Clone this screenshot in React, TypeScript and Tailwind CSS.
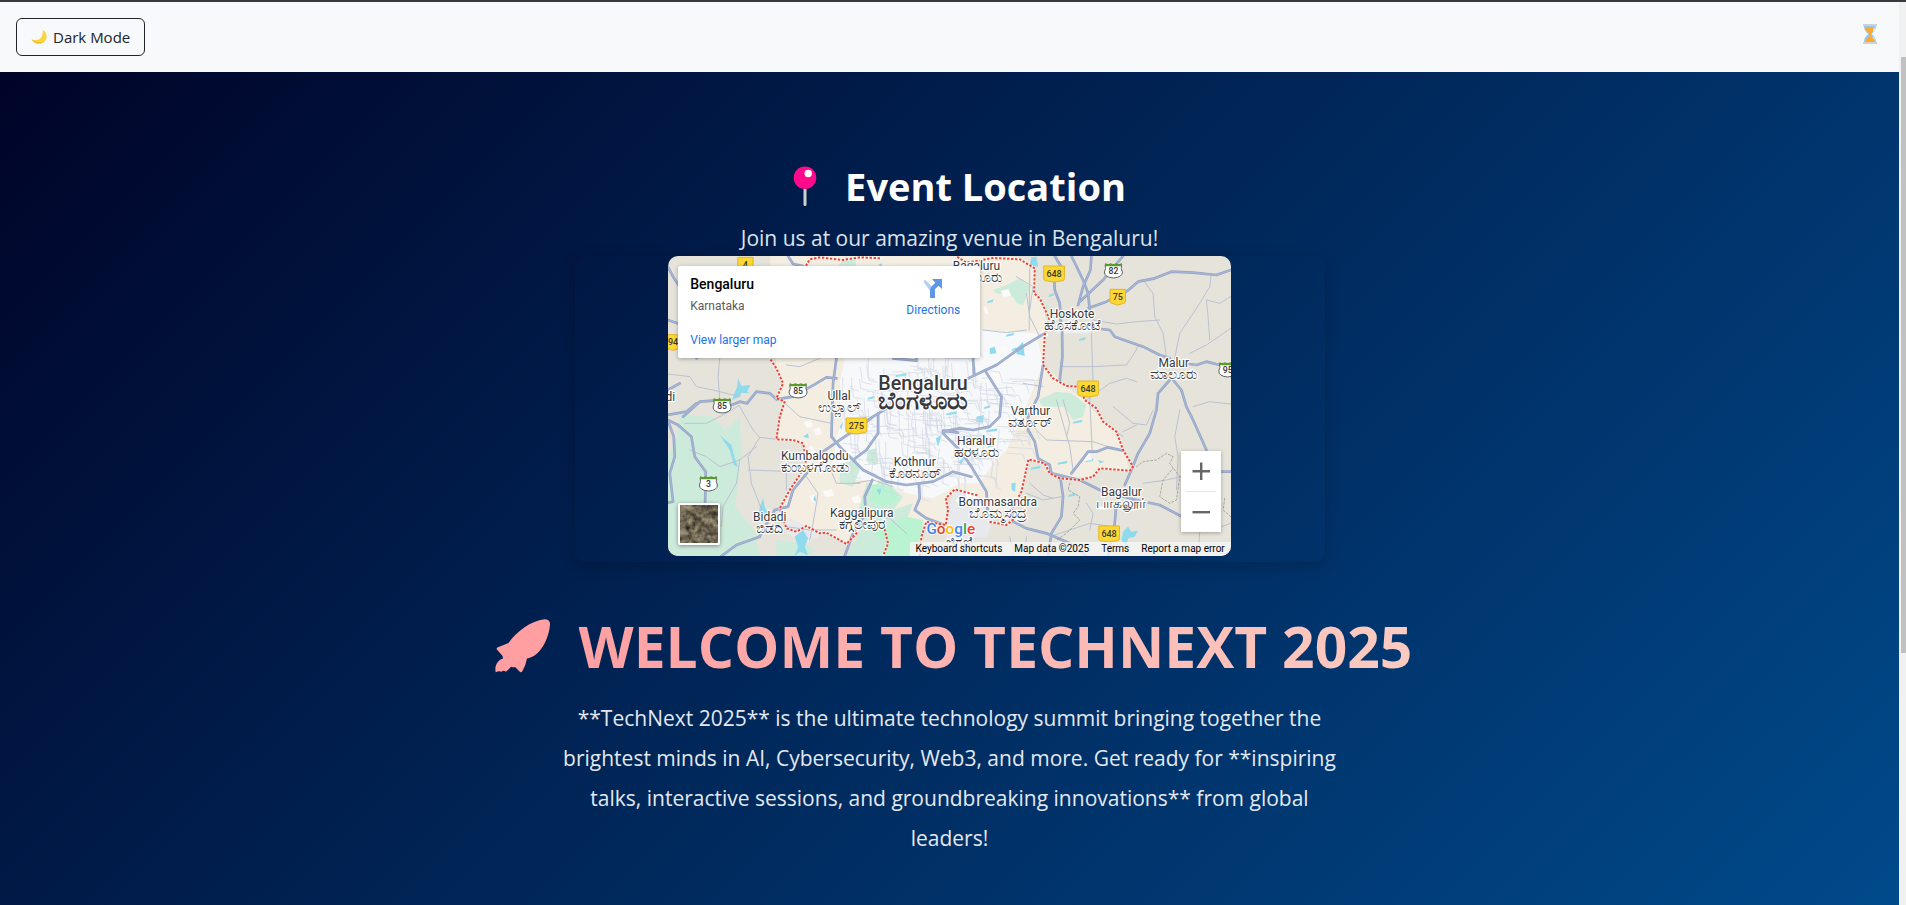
import React from "react";

const RED_BOUNDARY =
  "M675 840 L685 880 L670 918 M590 850 L560 882 L500 848 L480 850 L440 828 L410 845 L380 835 L360 775 L390 720 L420 675 L440 630 L430 580 L400 570 L350 568 L360 500 L375 455 L350 445 L370 400 L350 355 L330 325 M440 45 L450 28 L480 22 L548 30 L600 22 L665 25 M895 22 L920 38 L1000 24 L1080 28 L1125 55 L1123 130 L1140 145 L1168 205 L1155 255 L1150 345 L1180 385 L1220 408 L1260 410 L1275 450 L1310 475 L1330 515 L1370 545 L1390 600 L1420 650 L1410 662 L1320 655 L1300 680 L1260 690 L1200 685 L1170 670 L1155 640 L1106 628 L1095 680 L1085 725 L1055 780 L1065 805 L1040 825 L985 815 M950 735 L885 718 L858 745 L865 780 L858 825 L800 815 L785 860 L780 918";

const CITY_AREA =
  "M330 0 L350 355 L370 400 L350 440 L375 455 L350 568 L430 580 L440 630 L360 775 L380 835 L440 828 L500 848 L560 882 L600 840 L690 840 L780 830 L858 825 L858 745 L885 720 L950 735 L1000 800 L1070 760 L1106 628 L1155 640 L1200 685 L1300 680 L1320 655 L1410 662 L1390 600 L1370 545 L1330 515 L1275 450 L1220 408 L1150 345 L1155 255 L1168 205 L1125 130 L1125 40 L1000 0 Z";

const MAJOR_ROADS = [
  "M24 50 L40 80 L60 110 L110 135",
  "M24 210 L60 222",
  "M24 420 L60 400",
  "M70 500 L120 455 L160 452 L215 465 L240 455 L262 460 L290 425 L330 430 L350 448 L400 440 L470 400 L500 382 L530 385",
  "M24 510 L55 525 L95 560 L105 620 L138 665 L136 760",
  "M24 510 L42 560 L45 620 L30 670 L40 755 L24 758",
  "M24 495 L80 485 L110 460",
  "M530 325 L520 400 L515 560 L540 590",
  "M490 605 L555 560 L600 530 L640 500 L690 470",
  "M300 860 L230 885 L185 918",
  "M300 858 L345 780 L385 770 L400 720 L445 665",
  "M655 490 L655 550 L620 600 L580 630 L610 660 L680 695 L740 705 L820 695 L880 665 L935 680",
  "M540 590 L580 630",
  "M638 690 L615 740 L618 790 L580 850 L555 918",
  "M778 705 L780 745 L765 780 L800 805 L855 825",
  "M700 325 L770 332 L770 318",
  "M940 325 L943 375",
  "M925 385 L1010 345 L1080 295 L1155 250",
  "M978 365 L1025 440 L1020 500 L990 530 L940 540 L900 535 L850 545 L850 550 L900 600 L935 650 L980 725 L985 800",
  "M850 542 L895 548",
  "M1150 345 L1135 440 L1105 500 L1105 540 L1125 575 L1135 625",
  "M1135 625 L1170 645 L1175 670",
  "M1235 670 L1270 625 L1285 605 L1310 605 L1345 592 L1390 602",
  "M1175 670 L1260 690 L1320 720 L1420 748 L1500 765 L1563 798",
  "M1202 685 L1210 740 L1205 800 L1175 850 L1165 918",
  "M1060 815 L1100 835 L1160 850 L1230 880 L1280 918",
  "M1185 18 L1210 60 M1183 80 L1185 120 L1200 160 L1203 215",
  "M1207 240 L1208 320 L1200 390",
  "M1235 18 L1270 90 L1285 130 L1290 180",
  "M1295 18 L1292 60 L1270 110 L1255 165",
  "M1390 18 L1330 90 L1260 155",
  "M1285 175 L1340 155 L1400 125 L1435 95 L1485 85 L1535 65 L1600 68 L1670 75 L1713 60",
  "M1325 237 L1350 240 L1365 260 L1450 290 L1500 315 L1530 325",
  "M1590 342 L1610 345 L1640 335 L1680 345 L1713 350",
  "M1530 390 L1495 430 L1490 480 L1470 550 L1435 610 L1415 660 L1395 705",
  "M1540 390 L1565 420 L1580 470 L1600 510 L1640 600",
  "M1370 760 L1365 820 L1345 918",
  "M1683 665 L1713 665",
  "M135 310 L110 325",
  "M385 18 L400 42 L430 48",
];

const MINOR_ROADS = [
  "M24 372 L90 380 L110 410 L160 420 L240 440",
  "M100 60 L150 110 L180 170",
  "M180 325 L175 380 L180 450",
  "M240 470 L280 540 L300 562 L350 568",
  "M300 562 L265 620 L275 700 L310 790 L330 850",
  "M265 660 L380 664 L380 720",
  "M75 520 L140 520 L200 490 L240 465",
  "M90 600 L140 620 L180 650 L240 630 L290 590",
  "M240 630 L230 700 L190 770 L185 830",
  "M370 455 L420 500 L515 520",
  "M380 345 L420 350 L480 325",
  "M440 680 L475 730 L460 820 L450 870",
  "M515 665 L530 700 L600 700",
  "M380 830 L450 840 L530 840",
  "M600 780 L690 805 L740 850",
  "M580 700 L640 690 L700 710",
  "M1090 400 L1150 410 M1100 240 L1040 248 L970 240",
  "M1100 130 L1110 200 L1140 260 M1108 240 L1110 55",
  "M1070 80 L1120 110 L1110 180",
  "M1300 210 L1370 222 L1430 215 L1500 210",
  "M1210 350 L1300 350 L1400 345 L1430 300 L1435 285",
  "M1295 250 L1300 400 L1290 440 L1297 600",
  "M1450 90 L1480 130 L1485 200 L1510 250 L1520 320",
  "M1545 325 L1560 250 L1620 160 L1650 110 L1655 70",
  "M1590 310 L1640 285 L1713 235",
  "M1360 470 L1420 520 L1460 525 L1480 480",
  "M1390 560 L1370 545 M1390 545 L1430 525",
  "M1280 450 L1350 400 L1400 385 L1430 395",
  "M1600 470 L1650 455 L1713 462",
  "M1560 480 L1545 560 L1555 620 L1550 720",
  "M1190 450 L1230 590 L1240 660",
  "M1100 510 L1160 570 L1300 575 L1345 590",
  "M1210 450 L1230 520 L1220 560",
  "M1110 700 L1150 735 L1180 745",
  "M1100 730 L1150 750 L1205 740",
  "M1050 860 L1060 918 M1100 860 L1095 918",
  "M1170 860 L1230 840 L1290 820 L1360 830",
  "M1280 760 L1300 790 L1290 840",
  "M1620 846 L1615 918 M1640 846 L1713 820",
  "M1450 700 L1520 690 L1563 680",
  "M1640 150 L1680 160 L1713 140",
  "M1640 150 L1645 200 L1650 270",
];

const DASHED_TRACKS =
  "M1430 650 L1450 635 L1490 630 L1520 610 L1540 620 L1530 640 L1560 680 L1550 750 L1530 760 L1500 740 L1510 690 L1540 655 M1230 700 L1225 720 L1260 740 L1255 770 L1240 790 L1260 810 L1220 850 L1190 870 M1695 745 L1690 780 L1713 800";

const GREEN_AREAS = [
  "M60 490 L130 500 L150 495 L195 540 L240 500 L245 590 L240 660 L225 770 L290 850 L260 918 L24 918 L24 620 L50 560 Z",
  "M620 700 L670 690 L730 740 L700 780 L760 760 L740 810 L690 880 L670 918 L560 918 L600 850 L590 800 Z",
  "M170 880 L290 870 L300 918 L180 918 Z",
  "M1000 120 L1040 105 L1080 85 L1110 110 L1100 140 L1090 165 L1070 160 L1060 140 L1010 130 Z",
  "M1135 450 L1190 425 L1235 430 L1280 465 L1270 500 L1240 510 L1215 470 L1150 470 Z",
  "M540 640 L590 630 L600 660 L580 710 L540 700 Z",
  "M625 600 L650 595 L655 640 L635 650 L620 630 Z",
  "M535 48 L590 48 L585 25 L560 20 Z",
  "M1160 160 L1190 190 L1175 230 L1155 200 Z",
  "M350 870 L430 880 L470 900 L440 918 L350 918 Z",
  "M24 650 L70 690 L60 740 L24 740 Z",
];

const BRIGHT_GREEN =
  "M640 850 L690 820 L740 800 L790 810 L785 860 L770 918 L670 918 L685 880 Z M640 700 L700 715 L720 750 L670 770 L630 750 Z";

const WATER = [
  "M222 435 L232 410 L235 385 L245 408 L272 405 L262 425 L270 430 L245 428 L240 440 L218 450 Z",
  "M180 555 L215 585 L225 625 L235 650 L222 645 L210 600 Z",
  "M300 770 L310 745 L316 775 L330 790 L310 800 L298 785 Z",
  "M405 860 L430 840 L445 865 L435 890 L445 915 L420 905 L405 918 L415 890 Z",
  "M1115 22 L1130 20 L1135 50 L1110 45 Z",
  "M1075 290 L1090 275 L1095 318 L1070 312 Z",
  "M990 295 L1005 290 L1010 310 L990 312 Z",
  "M950 500 L972 495 L970 518 L950 516 Z",
  "M828 565 L845 555 L835 590 Z",
  "M1055 700 L1068 698 L1066 725 L1056 720 Z",
  "M1390 845 L1405 830 L1415 845 L1435 842 L1425 860 L1405 865 L1400 890 L1385 870 Z",
  "M540 530 L550 515 L545 540 Z",
  "M650 720 L665 715 L660 735 Z",
  "M655 45 L665 40 L668 52 Z",
  "M1315 630 L1335 635 L1320 640 Z",
  "M895 635 L915 620 L905 645 Z",
  "M430 560 L445 550 L447 565 Z",
  "M460 750 L466 735 L470 755 Z",
];

function seeded(seed: number) {
  let s = seed;
  return () => {
    s = (s * 16807) % 2147483647;
    return s / 2147483647;
  };
}

function cityStreets(): string {
  const rand = seeded(77);
  let d = "";
  for (let i = 0; i < 250; i++) {
    const x = Math.round(540 + rand() * 540);
    const y = Math.round(310 + rand() * 370);
    const nx = (x - 800) / 290;
    const ny = (y - 490) / 220;
    if (nx * nx + ny * ny > 1) continue;
    const len = Math.round(25 + rand() * 60);
    const tilt = Math.round(rand() * 14 - 7);
    d += rand() > 0.5 ? `M${x} ${y}l${len} ${tilt}l8 ${20 + tilt}` : `M${x} ${y}l${tilt} ${len}l${20 + tilt} 6`;
  }
  return d;
}

function patches(): { x: number; y: number; w: number; water: boolean }[] {
  const rand = seeded(4242);
  return Array.from({ length: 60 }, () => ({
    x: Math.round(420 + rand() * 860),
    y: Math.round(70 + rand() * 680),
    w: Math.round(8 + rand() * 24),
    water: rand() > 0.6,
  }));
}

type Place = { x: number; y: number; en: string; local: string };

const PLACES: Place[] = [
  { x: 950, y: 60, en: "Bagaluru", local: "ಬಾಗಲೂರು" },
  { x: 1237, y: 204, en: "Hoskote", local: "ಹೊಸಕೋಟೆ" },
  { x: 1542, y: 351, en: "Malur", local: "ಮಾಲೂರು" },
  { x: 538, y: 449, en: "Ullal", local: "ಉಲ್ಲಾಲ್" },
  { x: 1112, y: 495, en: "Varthur", local: "ವರ್ತೂರ್" },
  { x: 950, y: 585, en: "Haralur", local: "ಹರಳೂರು" },
  { x: 465, y: 630, en: "Kumbalgodu", local: "ಕುಂಬಳಗೋಡು" },
  { x: 765, y: 648, en: "Kothnur", local: "ಕೊಠನೂರ್" },
  { x: 1385, y: 738, en: "Bagalur", local: "பாகலூர்" },
  { x: 1014, y: 768, en: "Bommasandra", local: "ಬೊಮ್ಮಸಂದ್ರ" },
  { x: 330, y: 813, en: "Bidadi", local: "ಬಿಡದಿ" },
  { x: 606, y: 801, en: "Kaggalipura", local: "ಕಗ್ಗಲೀಪುರ" },
];

const HIGHWAYS = [
  { x: 257, y: 44, n: "4" },
  { x: 40, y: 276, n: "94" },
  { x: 1183, y: 71, n: "648" },
  { x: 1374, y: 140, n: "75" },
  { x: 1285, y: 416, n: "648" },
  { x: 590, y: 527, n: "275" },
  { x: 1348, y: 851, n: "648" },
];

const STATE_ROADS = [
  { x: 1361, y: 62, n: "82" },
  { x: 415, y: 422, n: "85" },
  { x: 187, y: 467, n: "85" },
  { x: 146, y: 701, n: "3" },
  { x: 1704, y: 359, n: "95" },
];

function MapDrawing() {
  return (
    <svg
      viewBox="24 18 1689 900"
      preserveAspectRatio="xMidYMid slice"
      className="block h-full w-full font-[Roboto,'Noto_Sans',sans-serif]"
      role="img"
      aria-label="Map of Bengaluru"
    >
      <rect x="0" y="0" width="1740" height="940" fill="#e6e3da" />
      <path d={CITY_AREA} fill="#f4eee2" />
      <path
        d="M560 300 L700 250 L960 240 L1130 250 L1150 345 L1110 440 L1080 520 L1040 600 L1000 640 L960 700 L900 700 L820 745 L740 730 L660 690 L590 690 L520 640 L530 560 L560 480 L540 400 Z"
        fill="#f7f8fa"
      />
      <path d="M885 720 L950 735 L1010 790 L980 860 L860 870 L865 780 Z" fill="#e8e9ec" />
      <path d="M380 800 L440 828 L500 848 L440 880 L380 850 Z" fill="#e8e9ec" />
      <path d="M1190 220 L1290 215 L1290 250 L1190 250 Z" fill="#eceef1" />
      {GREEN_AREAS.map((d) => (
        <path key={d} d={d} fill="#cdebdb" />
      ))}
      <path d={BRIGHT_GREEN} fill="#b9f3d2" />
      {patches().map((p, i) => (
        <path
          key={i}
          d={`M${p.x} ${p.y} l${p.w} -6 l${p.water ? -2 : 8} ${p.water ? 8 : 20} l-${p.w} 4 Z`}
          fill={p.water ? "#90daee" : "#fbfaf8"}
        />
      ))}
      {WATER.map((d) => (
        <path key={d} d={d} fill="#90daee" />
      ))}
      <g fill="none" strokeLinejoin="round" strokeLinecap="round">
        <path d={cityStreets()} stroke="#cfd7e4" strokeWidth="2" />
        {MINOR_ROADS.map((d) => (
          <path key={d} d={d} stroke="#bac2d2" strokeWidth="3" />
        ))}
        {MAJOR_ROADS.map((d) => (
          <path key={d} d={d} stroke="#93a3c6" strokeWidth="8" />
        ))}
        {MAJOR_ROADS.map((d) => (
          <path key={d} d={d} stroke="#a6b5d4" strokeWidth="4" />
        ))}
        <path d={DASHED_TRACKS} stroke="#8b8b88" strokeWidth="2" strokeDasharray="6 6" />
        <path d={RED_BOUNDARY} stroke="#fff" strokeWidth="8" opacity="0.5" />
        <path d={RED_BOUNDARY} stroke="#ea4335" strokeWidth="6" strokeDasharray="1 11" strokeLinecap="square" />
      </g>

      {HIGHWAYS.map((h) => (
        <g key={`${h.x}-${h.n}`}>
          <path
            d={
              h.n.length > 2
                ? `M${h.x - 31} ${h.y - 23} h62 v38 q0 5 -5 6 l-26 4 l-26 -4 q-5 -1 -5 -6 Z`
                : `M${h.x - 23} ${h.y - 22} h46 v36 q0 5 -5 6 l-18 5 l-18 -5 q-5 -1 -5 -6 Z`
            }
            fill="#fdd835"
            stroke="#e0b623"
            strokeWidth="3"
            strokeLinejoin="round"
          />
          <text x={h.x} y={h.y + 10} textAnchor="middle" fontSize="27" fontWeight="500" fill="#3c3a2c">
            {h.n}
          </text>
        </g>
      ))}
      {STATE_ROADS.map((h) => (
        <g key={`${h.x}-${h.n}`}>
          <path
            d={`M${h.x - 25} ${h.y - 18} h50 q-4 12 2 22 q0 16 -27 18 q-27 -2 -27 -18 q6 -10 2 -22 Z`}
            fill="#fff"
            stroke="#5f6368"
            strokeWidth="3"
          />
          <path d={`M${h.x - 25} ${h.y - 23} l8 4 l9 -3 l8 3 l8 -3 l9 3 l8 -4 v10 h-50 Z`} fill="#5b9a2f" />
          <text x={h.x} y={h.y + 11} textAnchor="middle" fontSize="26" fontWeight="500" fill="#303236">
            {h.n}
          </text>
        </g>
      ))}

      <g
        textAnchor="middle"
        fill="#37393d"
        stroke="#fff"
        strokeWidth="7"
        strokeLinejoin="round"
        style={{ paintOrder: "stroke" }}
      >
        {PLACES.map((p) => (
          <g key={p.en}>
            <text x={p.x} y={p.y + 37} fontSize="43">
              {p.local}
            </text>
            <text x={p.x} y={p.y} fontSize="36">
              {p.en}
            </text>
          </g>
        ))}
        <text x="790" y="476" fontSize="72" fontWeight="700">
          ಬೆಂಗಳೂರು
        </text>
        <text x="790" y="419" fontSize="59" fontWeight="500">
          Bengaluru
        </text>
        <text x="32" y="453" fontSize="36">
          di
        </text>
        <text x="898" y="890" fontSize="43">
          ಜಿಗಣಿ
        </text>
      </g>

      <text
        x="800"
        y="852"
        fontSize="46"
        fontWeight="500"
        stroke="#fff"
        strokeWidth="5"
        style={{ paintOrder: "stroke" }}
      >
        <tspan fill="#4285f4">G</tspan>
        <tspan fill="#ea4335">o</tspan>
        <tspan fill="#fbbc04">o</tspan>
        <tspan fill="#4285f4">g</tspan>
        <tspan fill="#34a853">l</tspan>
        <tspan fill="#ea4335">e</tspan>
      </text>
    </svg>
  );
}

function DirectionsIcon() {
  return (
    <svg viewBox="0 0 20 20" className="size-5" aria-hidden="true">
      <path d="M2 1.5 L9.5 9 L8 14 L0.5 4 Z" fill="#b5d0f5" />
      <path d="M7 20 V12.5 Q7 10 9 8 L12.3 4.7 L9 1 H19 V11 L15.5 7.7 L12.4 10.8 Q12 11.3 12 12 V20 Z" fill="#5e97e6" />
    </svg>
  );
}

function SatelliteThumb() {
  return (
    <svg viewBox="0 0 38 38" className="block h-full w-full" aria-hidden="true">
      <filter id="terrain" x="0" y="0" width="100%" height="100%" colorInterpolationFilters="sRGB">
        <feTurbulence type="fractalNoise" baseFrequency="0.16" numOctaves="5" seed="8" />
        <feColorMatrix values="0.6 0.4 0 0 -0.07  0.55 0.4 0 0 -0.08  0.45 0.35 0 0 -0.08  0 0 0 0 1" />
      </filter>
      <rect width="38" height="38" filter="url(#terrain)" />
    </svg>
  );
}

function EventMap() {
  return (
    <div className="relative h-[300px] w-3/4 overflow-hidden rounded-[10px] font-[Roboto,sans-serif]">
      <MapDrawing />

      <div className="absolute top-2.5 left-2.5 flex h-[92px] w-[302px] justify-between rounded-xs bg-white pt-2.5 pr-5 pb-2 pl-3 shadow-[0_1px_4px_rgba(0,0,0,0.3)]">
        <div className="flex flex-col items-start">
          <strong className="text-sm leading-4 font-medium text-black">Bengaluru</strong>
          <span className="mt-1.5 text-xs leading-4 text-[#5b5b5b]">Karnataka</span>
          <a href="#map" className="mt-[18px] text-xs leading-4 text-[#1a73e8]">
            View larger map
          </a>
        </div>
        <a href="#directions" className="flex flex-col items-center pt-0.5 text-xs text-[#1a73e8]">
          <DirectionsIcon />
          <span className="mt-0.5 leading-5">Directions</span>
        </a>
      </div>

      <button
        type="button"
        aria-label="Show satellite imagery"
        className="absolute bottom-[11px] left-2.5 size-[42px] overflow-hidden rounded-xs border-2 border-white shadow-[0_1px_4px_rgba(0,0,0,0.4)]"
      >
        <SatelliteThumb />
      </button>

      <div className="absolute right-2.5 bottom-6 flex w-10 flex-col items-center bg-white shadow-[0_1px_4px_rgba(0,0,0,0.3)]">
        <button type="button" aria-label="Zoom in" className="flex h-10 w-10 items-center justify-center">
          <svg viewBox="0 0 18 18" className="size-[18px]" aria-hidden="true">
            <path d="M8 0.500h2.400v7.500H18v2.400h-7.600V18H8v-7.600H0.500V8H8Z" fill="#666" />
          </svg>
        </button>
        <span className="h-px w-[30px] bg-[#e6e6e6]" />
        <button type="button" aria-label="Zoom out" className="flex h-10 w-10 items-center justify-center">
          <svg viewBox="0 0 18 18" className="size-[18px]" aria-hidden="true">
            <path d="M0.500 8H18v2.400H0.500Z" fill="#666" />
          </svg>
        </button>
      </div>

      <div className="absolute right-0 bottom-0 flex h-3.5 items-center bg-[#f5f5f5]/80 text-[10px] leading-3.5 text-black">
        <button type="button" className="px-1.5">
          Keyboard shortcuts
        </button>
        <span className="px-1.5">Map data ©2025</span>
        <a href="#terms" className="px-1.5">
          Terms
        </a>
        <a href="#report" className="px-1.5">
          Report a map error
        </a>
      </div>
    </div>
  );
}

function MoonIcon() {
  return (
    <svg viewBox="0 0 16 16" className="size-4" aria-hidden="true">
      <path
        d="M11.400 0.800 C16 3 17 8.800 13.700 12.200 C10.200 15.900 3.500 15.400 0.500 10.200 C4 11.800 8 11.300 10 8.800 C11.800 6.500 12 3.600 11.400 0.800 Z"
        fill="#fdd43c"
      />
      <path d="M0.500 10.200 C3.500 15.400 10.200 15.900 13.700 12.200 C10 14.300 5 14 0.500 10.200 Z" fill="#f0b32e" />
    </svg>
  );
}

function HourglassIcon() {
  return (
    <svg viewBox="0 0 14 20" className="h-5 w-3.5" role="img" aria-label="Countdown">
      <path d="M1 1.500 H13 C13 6 11 8 8.600 10 C11 12 13 14 13 18.500 H1 C1 14 3 12 5.400 10 C3 8 1 6 1 1.500 Z" fill="#8fc9f5" />
      <path d="M2 3.500 H12 C11.500 6.500 9.500 8 7 10 C4.500 8 2.500 6.500 2 3.500 Z" fill="#ffaa2b" />
      <path d="M6 9 H8 V12.500 C10 13.500 11.500 15.500 12 18 H2 C2.500 15.500 4 13.500 6 12.500 Z" fill="#ffaa2b" />
      <path d="M10 6 C11 5 11.500 4 12 3 V6 L10 8 Z M9.500 12 L11.500 14 L12 16.500 L10.500 14.500 Z" fill="#e3f2fd" />
      <rect width="14" height="2" fill="#cfd1d4" />
      <rect y="18" width="14" height="2" fill="#cfd1d4" />
    </svg>
  );
}

function PinIcon() {
  return (
    <svg viewBox="0 0 24 40" className="h-10 w-6" aria-hidden="true">
      <rect x="10.500" y="22" width="3" height="18" rx="1.500" fill="#cfcfd2" />
      <circle cx="12" cy="11.700" r="11.300" fill="#ff0a8c" />
      <circle cx="15.200" cy="7.500" r="3.700" fill="#fff" />
    </svg>
  );
}

function RocketIcon() {
  return (
    <svg viewBox="0 0 168 164" className="h-[54px] w-14" aria-hidden="true">
      <path
        d="M149 1 Q167 1 166 17 C163 60 136 115 96 120 Q93 140 82 159 Q79 163 75 161 L60 146 Q54 148 48 145 Q42 152 32 160 Q24 155 19 160 Q10 157 1 162 Q-3 138 12 126 Q18 120 23 121 L22 112 L4 92 Q3 87 8 86 L40 73 C66 37 108 6 149 1 Z"
        fill="#ff9fa1"
      />
    </svg>
  );
}

export default function App() {
  return (
    <div className="flex h-screen overflow-hidden border-t-2 border-[#3a3940] bg-[#f1f1f1] font-['Segoe_UI','Open_Sans',sans-serif]">
      <div className="flex min-w-0 flex-1 flex-col">
        <header className="flex h-[70px] shrink-0 items-start justify-between bg-[#f8f9fa] px-4 pt-4">
          <button
            type="button"
            className="flex h-[38px] items-center gap-1.5 rounded-md border border-[#212529] px-3.5 text-[15px] text-[#212529]"
          >
            <MoonIcon />
            Dark Mode
          </button>
          <span className="mr-1.5 pt-1.5">
            <HourglassIcon />
          </span>
        </header>

        <main className="flex flex-1 flex-col items-center bg-[#000428] bg-linear-[135deg,#000428,#004a8b] px-4 pt-[90px] text-center text-white">
          <section className="flex w-full max-w-[750px] flex-col items-center">
            <h2 className="flex items-center gap-7 pl-5 text-[38px] leading-12 font-bold">
              <PinIcon />
              Event Location
            </h2>
            <p className="mt-3 mb-0.5 text-[21px] leading-8 text-[#dfe3ea]">Join us at our amazing venue in Bengaluru!</p>
            <div className="flex w-full justify-center rounded-[10px] pb-1.5 shadow-[0_4px_15px_rgba(0,0,0,0.2)]">
              <EventMap />
            </div>
          </section>

          <h1 className="mt-12 flex items-center gap-7 pl-2 text-[57px] leading-[72px] font-bold">
            <RocketIcon />
            <span className="bg-linear-[90deg,#ffa0a2,#fbcbc1] bg-clip-text text-transparent">WELCOME TO TECHNEXT 2025</span>
          </h1>
          <p className="mt-4 w-full max-w-[790px] text-[21px] leading-10 text-[#e3e8f0]">
            **TechNext 2025** is the ultimate technology summit bringing together the brightest minds in AI, Cybersecurity,
            Web3, and more. Get ready for **inspiring talks, interactive sessions, and groundbreaking innovations** from
            global leaders!
          </p>
        </main>
      </div>

      <div className="flex w-[7px] shrink-0 flex-col bg-[#f1f1f1] pt-[55px] pl-0.5" aria-hidden="true">
        <div className="h-[596px] bg-[#c1c1c1]" />
      </div>
    </div>
  );
}
